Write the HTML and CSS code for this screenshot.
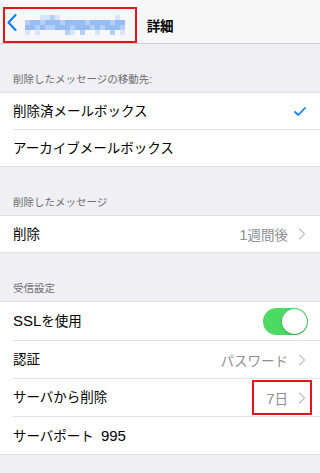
FILE: index.html
```html
<!DOCTYPE html>
<html lang="ja">
<head>
<meta charset="utf-8">
<title>詳細</title>
<link rel="stylesheet" href="styles.css">
</head>
<body>
<div class="screen">
  <header class="nav">
    <div class="nav-back">
      <svg class="back-chevron" width="10" height="17" viewBox="0 0 10 17"><polyline points="8.5,1 1.5,8.5 8.5,16" fill="none" stroke="#157efb" stroke-width="2.2" stroke-linecap="round" stroke-linejoin="round"/></svg>
      <svg class="mosaic" width="100" height="20" viewBox="0 0 100 20">
        <g fill="#d6e5fb">
          <rect x="15" y="0" width="5" height="5"/><rect x="20" y="0" width="5" height="5"/><rect x="30" y="0" width="5" height="5"/>
          <rect x="90" y="0" width="5" height="5"/>
          <rect x="10" y="15" width="5" height="5"/><rect x="45" y="15" width="5" height="5"/><rect x="70" y="15" width="5" height="5"/>
          <rect x="95" y="15" width="5" height="5"/><rect x="0" y="15" width="5" height="5"/>
        </g>
        <g fill="#b5d0f7">
          <rect x="25" y="0" width="5" height="5"/><rect x="40" y="15" width="5" height="5"/>
          <rect x="0" y="5" width="5" height="5"/><rect x="15" y="5" width="5" height="5"/><rect x="35" y="5" width="5" height="5"/>
          <rect x="60" y="5" width="5" height="5"/><rect x="85" y="5" width="5" height="5"/>
          <rect x="10" y="10" width="5" height="5"/><rect x="20" y="10" width="5" height="5"/><rect x="25" y="10" width="5" height="5"/>
          <rect x="45" y="10" width="5" height="5"/><rect x="65" y="10" width="5" height="5"/><rect x="75" y="10" width="5" height="5"/>
          <rect x="95" y="10" width="5" height="5"/><rect x="55" y="15" width="5" height="5"/><rect x="85" y="15" width="5" height="5"/>
        </g>
        <g fill="#97bbf3">
          <rect x="5" y="5" width="5" height="5"/><rect x="10" y="5" width="5" height="5"/><rect x="20" y="5" width="5" height="5"/>
          <rect x="25" y="5" width="5" height="5"/><rect x="30" y="5" width="5" height="5"/><rect x="40" y="5" width="5" height="5"/>
          <rect x="45" y="5" width="5" height="5"/><rect x="50" y="5" width="5" height="5"/><rect x="55" y="5" width="5" height="5"/>
          <rect x="65" y="5" width="5" height="5"/><rect x="70" y="5" width="5" height="5"/><rect x="75" y="5" width="5" height="5"/>
          <rect x="80" y="5" width="5" height="5"/><rect x="90" y="5" width="5" height="5"/><rect x="95" y="5" width="5" height="5"/>
          <rect x="0" y="10" width="5" height="5"/><rect x="5" y="10" width="5" height="5"/><rect x="15" y="10" width="5" height="5"/>
          <rect x="30" y="10" width="5" height="5"/><rect x="35" y="10" width="5" height="5"/><rect x="40" y="10" width="5" height="5"/>
          <rect x="50" y="10" width="5" height="5"/><rect x="55" y="10" width="5" height="5"/><rect x="60" y="10" width="5" height="5"/>
          <rect x="70" y="10" width="5" height="5"/><rect x="80" y="10" width="5" height="5"/><rect x="85" y="10" width="5" height="5"/>
          <rect x="90" y="10" width="5" height="5"/>
        </g>
      </svg>
    </div>
    <h1 class="nav-title">詳細</h1>
    <div class="nav-spacer"></div>
    <div class="mark mark-nav"></div>
  </header>

  <div class="section-header">削除したメッセージの移動先:</div>
  <div class="group">
    <div class="row">
      <div class="cell">
        <span class="label">削除済メールボックス</span>
        <svg class="check" width="12" height="9" viewBox="0 0 12 9"><polyline points="1,5 4.3,8 11,1" fill="none" stroke="#157efb" stroke-width="1.8" stroke-linecap="round" stroke-linejoin="round"/></svg>
      </div>
    </div>
    <div class="row">
      <div class="cell">
        <span class="label">アーカイブメールボックス</span>
      </div>
    </div>
  </div>

  <div class="section-header">削除したメッセージ</div>
  <div class="group">
    <div class="row">
      <div class="cell">
        <span class="label">削除</span>
        <span class="value"><span class="latin">1</span>週間後</span>
        <svg class="chev" width="8" height="12" viewBox="0 0 8 12"><polyline points="1.5,1 6.5,6 1.5,11" fill="none" stroke="#c7c7cc" stroke-width="1.5" stroke-linecap="round" stroke-linejoin="round"/></svg>
      </div>
    </div>
  </div>

  <div class="section-header">受信設定</div>
  <div class="group group-tall">
    <div class="row">
      <div class="cell cell-toggle">
        <span class="label"><span class="latin">SSL</span>を使用</span>
        <div class="toggle"><div class="knob"></div></div>
      </div>
    </div>
    <div class="row">
      <div class="cell">
        <span class="label">認証</span>
        <span class="value">パスワード</span>
        <svg class="chev" width="8" height="12" viewBox="0 0 8 12"><polyline points="1.5,1 6.5,6 1.5,11" fill="none" stroke="#c7c7cc" stroke-width="1.5" stroke-linecap="round" stroke-linejoin="round"/></svg>
      </div>
    </div>
    <div class="row row-marked">
      <div class="cell">
        <span class="label">サーバから削除</span>
        <span class="value"><span class="latin">7</span>日</span>
        <svg class="chev" width="8" height="12" viewBox="0 0 8 12"><polyline points="1.5,1 6.5,6 1.5,11" fill="none" stroke="#c7c7cc" stroke-width="1.5" stroke-linecap="round" stroke-linejoin="round"/></svg>
      </div>
      <div class="mark mark-row"></div>
    </div>
    <div class="row">
      <div class="cell">
        <span class="label">サーバポート<span class="latin port">995</span></span>
      </div>
    </div>
  </div>
</div>
</body>
</html>
```

FILE: styles.css
```css
* { box-sizing: border-box; margin: 0; padding: 0; }

html, body {
  width: 320px;
  height: 473px;
  overflow: hidden;
  background: #efeff4;
}

body {
  font-family: "Liberation Sans", "Noto Sans CJK JP", sans-serif;
  color: #000;
}

.screen {
  position: relative;
  width: 320px;
  height: 473px;
}

.nav {
  position: relative;
  height: 44px;
  background: #f7f7f8;
  border-bottom: 1px solid #cfcfd3;
  display: grid;
  grid-template-columns: 1fr auto 1fr;
  align-items: center;
}

.nav-back {
  display: flex;
  align-items: center;
  padding-left: 7px;
  gap: 8px;
  margin-top: 6px;
}

.back-chevron { display: block; margin-top: -4px; }
.mosaic { display: block; }

.nav-title {
  font-size: 13.5px;
  font-weight: bold;
  letter-spacing: -0.3px;
  margin-top: 6px;
}

.mark {
  position: absolute;
  border: 2px solid #e8121c;
  pointer-events: none;
}

.mark-nav {
  left: 3px;
  top: 7px;
  width: 134px;
  height: 36px;
}

.section-header {
  height: 48px;
  display: flex;
  align-items: flex-end;
  padding: 0 0 6px 13px;
  font-size: 10.5px;
  line-height: 13px;
  color: #6d6d72;
}

.group {
  background: #fff;
  border-top: 1px solid #dedee2;
  border-bottom: 1px solid #dedee2;
}

.row {
  position: relative;
  padding-left: 13px;
}

.cell {
  height: 37px;
  display: flex;
  align-items: center;
  padding-right: 14px;
  border-bottom: 1px solid #e2e2e5;
}

.group .row:last-child .cell {
  height: 36px;
  border-bottom: none;
}

.group-tall .cell { height: 38px; }
.group-tall .row:last-child .cell { height: 37px; }
.group-tall .cell-toggle { height: 39px; }

.label {
  flex: 1;
  font-size: 13.5px;
  line-height: 16px;
  padding-top: 1px;
}

.latin {
  font-size: 15px;
}

.port { margin-left: 7px; }

.value {
  font-size: 13.5px;
  color: #8e8e93;
  margin-right: 10px;
}

.chev { display: block; }

.check { display: block; }

.toggle {
  width: 45px;
  height: 27px;
  border-radius: 14px;
  background: #4cd964;
  display: flex;
  justify-content: flex-end;
  align-items: center;
  padding: 1px;
  margin-right: -2px;
}

.knob {
  width: 25px;
  height: 25px;
  border-radius: 50%;
  background: #fff;
  box-shadow: 0 1px 2px rgba(0,0,0,0.25), 0 0 0 0.5px rgba(0,0,0,0.08);
}

.mark-row {
  right: 8px;
  top: 1px;
  width: 60px;
  height: 35px;
}
```
